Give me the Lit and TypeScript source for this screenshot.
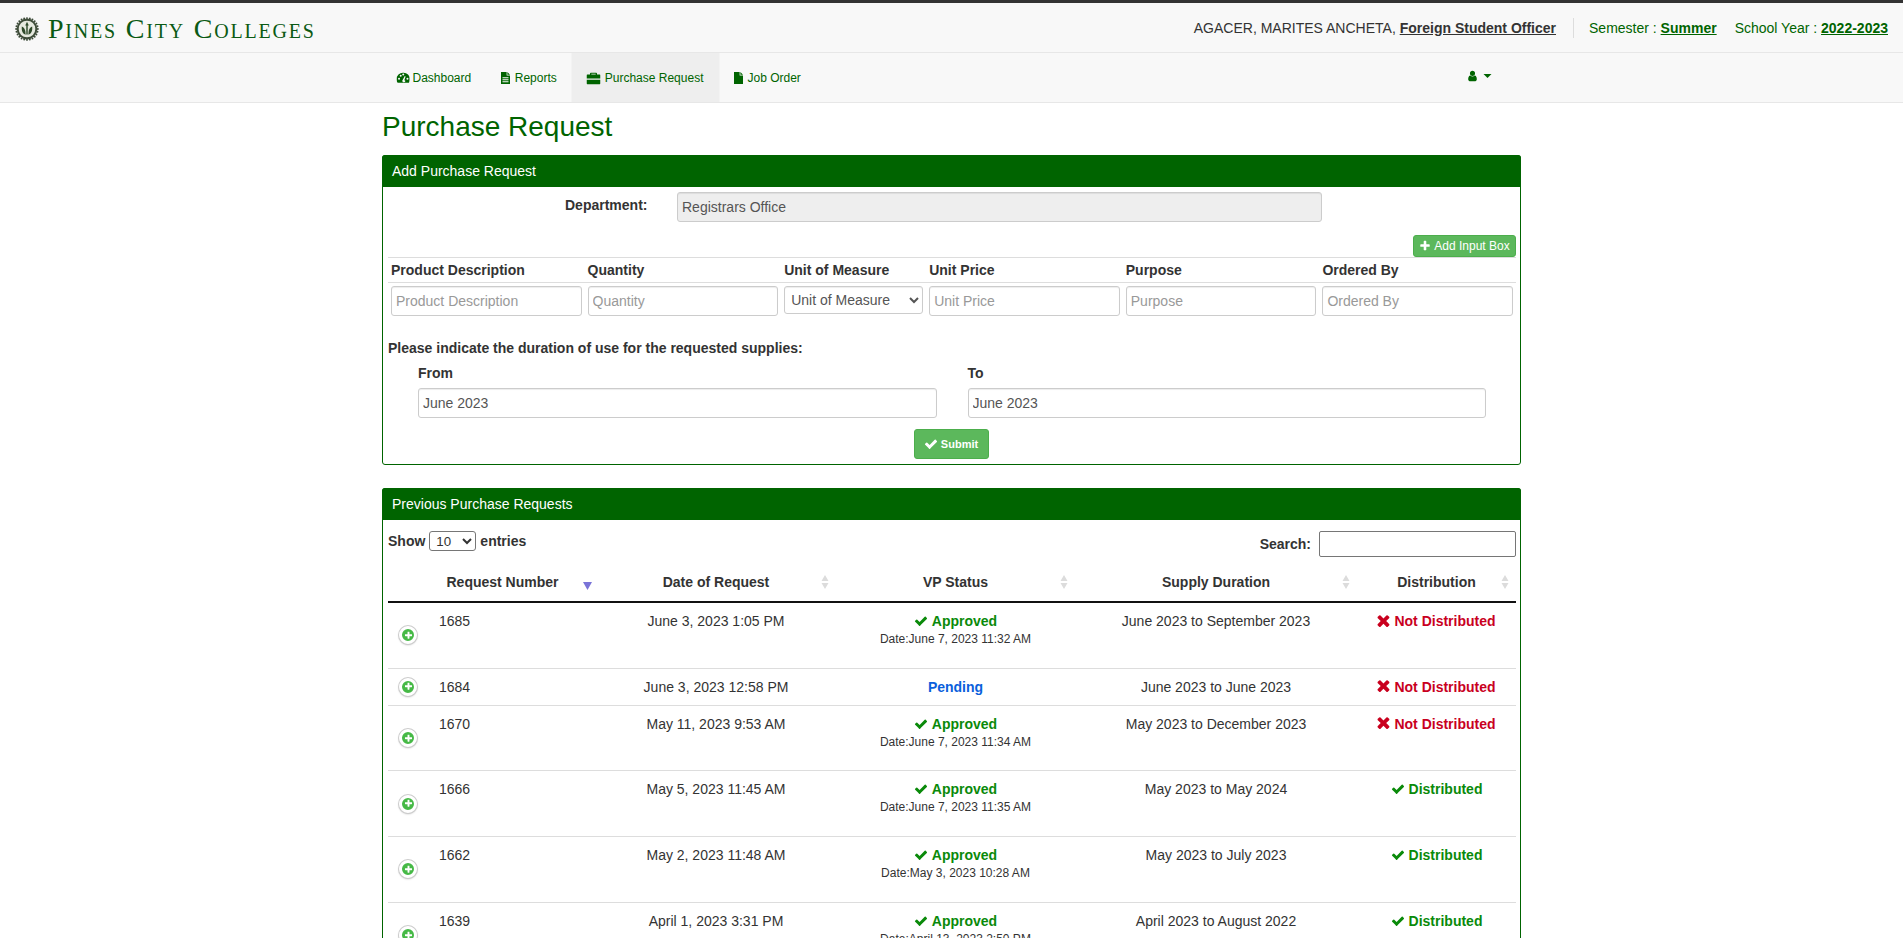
import { LitElement, html, css, svg } from "lit";
import { customElement } from "lit/decorators.js";

const ico = (vb: string, d: string, cls = "ico") =>
  html`<svg class=${cls} viewBox=${vb} aria-hidden="true"><path d=${d}></path></svg>`;
const CHECK = "M1671 566q0 40-28 68l-724 724-136 136q-28 28-68 28t-68-28l-136-136-362-362q-28-28-28-68t28-68l136-136q28-28 68-28t68 28l294 295 656-657q28-28 68-28t68 28l136 136q28 28 28 68z";
const TIMES = "M1490 1322q0 40-28 68l-136 136q-28 28-68 28t-68-28l-294-294-294 294q-28 28-68 28t-68-28l-136-136q-28-28-28-68t28-68l294-294-294-294q-28-28-28-68t28-68l136-136q28-28 68-28t68 28l294 294 294-294q28-28 68-28t68 28l136 136q28 28 28 68t-28 68l-294 294 294 294q28 28 28 68z";
const PLUS = "M1600 736v192q0 40-28 68t-68 28h-416v416q0 40-28 68t-68 28h-192q-40 0-68-28t-28-68v-416h-416q-40 0-68-28t-28-68v-192q0-40 28-68t68-28h416v-416q0-40 28-68t68-28h192q40 0 68 28t28 68v416h416q40 0 68 28t28 68z";
const USER = "M1536 1399q0 109-62.5 187t-150.5 78h-854q-88 0-150.5-78t-62.5-187q0-85 8.5-160.5t31.5-152 58.5-131 94-89 134.5-34.5q131 128 313 128t313-128q76 0 134.5 34.5t94 89 58.5 131 31.5 152 8.5 160.5zm-256-887q0 159-112.5 271.5t-271.5 112.5-271.5-112.5-112.5-271.5 112.5-271.5 271.5-112.5 271.5 112.5 112.5 271.5z";
const VB = "0 0 1792 1792";

const dashIcon = html`<svg class="ico dash" viewBox="0 0 16 16" aria-hidden="true"><path fill-rule="evenodd" d="M8 2.2a7.6 7.6 0 0 0-8 7.6c0 1.6.5 3 1.3 4.2h13.4c.8-1.200 1.300-2.600 1.300-4.200a7.600 7.600 0 0 0-8-7.600zM3 10.300a1.200 1.200 0 1 1 0-2.400 1.200 1.200 0 0 1 0 2.400zm2-3.600a1.200 1.200 0 1 1 0-2.400 1.200 1.200 0 0 1 0 2.400zm3-1.300a1.200 1.200 0 1 1 0-2.400 1.200 1.200 0 0 1 0 2.400zm2.500 6.700a1.900 1.900 0 0 1-3.700-.6l3-5.500 1 .5-1.500 4.400c.8.100 1.300.6 1.200 1.200zM13 10.300a1.200 1.200 0 1 1 0-2.400 1.200 1.200 0 0 1 0 2.400z"></path></svg>`;
const fileTextIcon = html`<svg class="ico" viewBox="0 0 16 16" aria-hidden="true"><path fill-rule="evenodd" d="M2 0h7.500v4.500H14V16H2zM10.500 0 14 3.500h-3.500zM4 7v1.300h8V7zm0 2.700v1.300h8V9.700zM4 12.300v1.300h8v-1.300z"></path></svg>`;
const fileIcon = html`<svg class="ico" viewBox="0 0 16 16" aria-hidden="true"><path d="M2 0h7.500v4.500H14V16H2zM10.500 0 14 3.500h-3.500z"></path></svg>`;
const caseIcon = html`<svg class="ico case" viewBox="0 0 16 16" aria-hidden="true"><path fill-rule="evenodd" d="M5 2h6a1 1 0 0 1 1 1v1h3a1 1 0 0 1 1 1v3.500H0V5a1 1 0 0 1 1-1h3V3a1 1 0 0 1 1-1zm.500 1.200V4h5v-.8zM0 10h16v4a1 1 0 0 1-1 1H1a1 1 0 0 1-1-1z"></path></svg>`;

const sealDots = Array.from({ length: 24 }, (_, i) => {
  const a = (i / 24) * Math.PI * 2;
  return svg`<circle cx=${15 + 13.6 * Math.cos(a)} cy=${15 + 13.6 * Math.sin(a)} r="1.200"></circle>`;
});
const seal = html`<svg class="seal" viewBox="0 0 30 30" aria-hidden="true">
  <g fill="#3c4a38">${sealDots}</g>
  <circle cx="15" cy="15" r="13" fill="#3f4d3a"></circle>
  <circle cx="15" cy="15" r="10.400" fill="#e6e9df"></circle>
  <path fill="#2f4a2a" d="M15 6l2.200 4.500h-1.300V22h-1.800V10.500h-1.300zM8.500 12c2.600 1 4.200 3.200 4.500 6.500l.3 3.800c-3.600-1-5.300-4.500-4.800-10.300zM21.500 12c-2.600 1-4.200 3.200-4.500 6.500l-.3 3.800c3.600-1 5.300-4.500 4.800-10.300z"></path>
</svg>`;

type Row = { n: string; d: string; vp?: string; dur: string; dist: boolean };
const rows: Row[] = [
  { n: "1685", d: "June 3, 2023 1:05 PM", vp: "June 7, 2023 11:32 AM", dur: "June 2023 to September 2023", dist: false },
  { n: "1684", d: "June 3, 2023 12:58 PM", dur: "June 2023 to June 2023", dist: false },
  { n: "1670", d: "May 11, 2023 9:53 AM", vp: "June 7, 2023 11:34 AM", dur: "May 2023 to December 2023", dist: false },
  { n: "1666", d: "May 5, 2023 11:45 AM", vp: "June 7, 2023 11:35 AM", dur: "May 2023 to May 2024", dist: true },
  { n: "1662", d: "May 2, 2023 11:48 AM", vp: "May 3, 2023 10:28 AM", dur: "May 2023 to July 2023", dist: true },
  { n: "1639", d: "April 1, 2023 3:31 PM", vp: "April 13, 2023 2:50 PM", dur: "April 2023 to August 2022", dist: true },
];

const sortBoth = html`<svg class="sort" viewBox="0 0 8 16" aria-hidden="true"><path d="M4 1l3.500 6h-7zM4 15l-3.500-6h7z"></path></svg>`;
const sortDesc = html`<svg class="sort desc" viewBox="0 0 8 8" aria-hidden="true"><path d="M4 7L0 0h8z"></path></svg>`;

@customElement("app-root")
export class AppRoot extends LitElement {
  static styles = css`
    :host {
      display: block;
      height: 100vh;
      overflow: hidden;
      background: #fff;
      color: #333;
      font: 14px/20px "Liberation Sans", Arial, sans-serif;
    }
    * { box-sizing: border-box; }
    .ico { width: 1em; height: 1em; fill: currentColor; flex: none; }

    .topbar {
      height: 53px;
      border-top: 3px solid #333;
      border-bottom: 1px solid #e7e7e7;
      background: #f8f8f8;
      display: flex;
      align-items: center;
      justify-content: space-between;
      padding: 0 15px 0 15px;
    }
    .brand { display: flex; align-items: center; gap: 9px; margin-top: 2px; }
    .seal { width: 24px; height: 24px; }
    .wordmark {
      font: 28px/30px "Liberation Serif", "Times New Roman", serif;
      font-variant: small-caps;
      letter-spacing: 1.8px;
      color: #0b5a14;
    }
    .meta { display: flex; align-items: center; height: 20px; }
    .meta a { font-weight: bold; text-decoration: underline; color: inherit; }
    .who { padding-right: 17px; height: 20px; }
    .term {
      color: #006400;
      border-left: 1px solid #ddd;
      padding-left: 15px;
      display: flex;
      gap: 18px;
    }

    .navbar {
      height: 50px;
      background: #f8f8f8;
      border-bottom: 1px solid #e7e7e7;
    }
    .nav-inner {
      width: 1140px;
      margin: 0 auto;
      display: flex;
      justify-content: space-between;
      height: 49px;
      color: #006400;
      font-size: 12px;
      transform: translateX(-.5px);
    }
    .tabs { display: flex; }
    .tab { display: flex; align-items: center; gap: 3px; padding: 1px 15px 0; }
    .tab .ico { width: 12px; height: 12px; }
    .tab .ico.dash { width: 13.500px; height: 13.500px; }
    .tab:first-child { padding-right: 13.500px; }
    .tab .ico.case { width: 14px; height: 14px; }
    .tab.active { background: #eee; gap: 4px; padding-right: 16px; }
    .tab.active + .tab { padding-left: 13px; }
    .usermenu { display: flex; align-items: center; gap: 5px; padding: 0 30px 4px 0; }
    .usermenu .ico { width: 12px; height: 12px; }
    .caret { width: 0; height: 0; border: 4px solid transparent; border-top-color: #006400; border-bottom: 0; }

    main { width: 1139px; margin: 0 auto; }
    h1 {
      margin: 0;
      padding: 8px 0 0 0;
      height: 52px;
      font: 400 28px/32px "Liberation Sans", Arial, sans-serif;
      color: #006400;
    }
    .panel {
      border: 1px solid #006400;
      border-radius: 3px;
      margin-bottom: 23px;
    }
    .panel-head {
      height: 32px;
      margin: -1px -1px 0;
      background: #006400;
      color: #fff;
      padding: 6px 10px 0 10px;
      border-radius: 3px 3px 0 0;
    }
    .panel-body { padding: 5px 4px 5px 5px; }

    input, select {
      font: 14px/20px "Liberation Sans", Arial, sans-serif;
      color: #555;
    }
    .control {
      display: block;
      width: 100%;
      height: 30px;
      border: 1px solid #ccc;
      border-radius: 3px;
      padding: 5px 4px;
      background: #fff;
      box-shadow: inset 0 1px 1px rgba(0,0,0,.075);
    }
    .control::placeholder { color: #999; opacity: 1; }
    .control[readonly] { background: #eee; }

    .dept { display: flex; }
    .dept label { width: 289px; padding: 3px 0 0 177px; font-weight: bold; }
    .dept .control { width: 645px; }

    .add-row { display: flex; justify-content: flex-end; margin-top: 13px; }
    .btn {
      display: inline-flex;
      align-items: center;
      justify-content: center;
      gap: 3px;
      border: 1px solid #4cae4c;
      border-radius: 3px;
      background: #5cb85c;
      color: #fff;
      font-family: inherit;
      padding: 0;
    }
    .btn-add { width: 103px; height: 22px; font-size: 12px; }
    .btn-add .ico { width: 12px; height: 12px; }
    .btn-submit { width: 75px; height: 30px; font-size: 11px; font-weight: bold; }
    .btn-submit .ico { width: 14px; height: 14px; }

    .entry { width: 100%; border-collapse: separate; border-spacing: 0; table-layout: fixed; }
    .entry th {
      text-align: left;
      padding: 2px 3px 2px 3px;
      height: 25px;
      font-weight: bold;
      border-top: 1px solid #ddd;
      border-bottom: 1px solid #ddd;
    }
    .entry td { padding: 3px; vertical-align: top; }
    .entry select.control { height: 28px; padding: 0 2px 0 2px; }
    .entry th.c3 { width: 145px; }

    .duration { margin: 19px 0 0; font-weight: bold; }
    .range { display: grid; grid-template-columns: 518.500px 518.500px; column-gap: 31px; padding: 5px 0 0 30px; }
    .range label { display: block; font-weight: bold; margin-bottom: 5px; }
    .submit-row { display: flex; justify-content: center; margin: 11px 0 0 -2px; }

    .panel.list { margin-bottom: 60px; }
    .dt-top { display: flex; justify-content: space-between; height: 38px; font-weight: bold; padding-top: 6px; }
    .show { display: flex; align-items: flex-start; gap: 2px; }
    .show select { width: 47px; height: 20px; padding: 0 0 0 2px; border: 1px solid #767676; border-radius: 3px; background: #fff; color: #333; font-size: 13.330px; margin: 0 2px; }
    .search { display: flex; gap: 8px; align-items: center; height: 26px; }
    .search input { width: 197px; height: 26px; border: 1px solid #767676; border-radius: 2px; background: #fff; }

    .dt { width: 100%; table-layout: fixed; border-collapse: separate; border-spacing: 0; }
    .dt th {
      position: relative;
      height: 40px;
      padding: 0 10px;
      text-align: center;
      font-weight: bold;
      border-bottom: 2px solid #111;
    }
    .dt th:first-child { padding-left: 31px; }
    .sort { position: absolute; right: 7px; top: 11px; width: 8px; height: 16px; fill: #dcdcdc; }
    .sort.desc { fill: #7a74d8; right: 4px; top: 19px; width: 9px; height: 9px; }
    .dt td {
      padding: 8px 10px;
      text-align: center;
      vertical-align: top;
      border-top: 1px solid #ddd;
    }
    .dt tbody tr:first-child td { border-top: 0; }
    .dt td.num { position: relative; text-align: left; padding-left: 51px; }
    .plus {
      position: absolute;
      left: 11px;
      top: 50%;
      margin-top: -9px;
      width: 18px;
      height: 18px;
      border-radius: 50%;
      background: #46b946;
      border: 3px solid #fff;
      box-shadow: 0 0 0 1px #ccc, 0 1px 2px rgba(0,0,0,.3);
      display: flex;
      align-items: center;
      justify-content: center;
      color: #fff;
    }
    .plus .ico { width: 9px; height: 9px; }
    .status { display: inline-flex; align-items: center; gap: 4px; font-weight: bold; vertical-align: top; }
    .status .ico { width: 14px; height: 14px; }
    .status .ico.x { width: 13px; height: 13px; margin-top: -2px; }
    .ok { color: #0a8a0a; }
    .bad { color: #c9001e; }
    .wait { color: #0a5fdc; }
    .stamp { display: block; font-size: 12px; line-height: 15px; padding-bottom: 12.700px; margin-top: 1px; }
  `;

  render() {
    return html`
      <header class="topbar">
        <div class="brand">${seal}<span class="wordmark">Pines City Colleges</span></div>
        <div class="meta">
          <div class="who">AGACER, MARITES ANCHETA, <a>Foreign Student Officer</a></div>
          <div class="term">
            <span>Semester : <a>Summer</a></span>
            <span>School Year : <a>2022-2023</a></span>
          </div>
        </div>
      </header>
      <nav class="navbar">
        <div class="nav-inner">
          <div class="tabs">
            <div class="tab">${dashIcon}Dashboard</div>
            <div class="tab">${fileTextIcon}Reports</div>
            <div class="tab active">${caseIcon}Purchase Request</div>
            <div class="tab">${fileIcon}Job Order</div>
          </div>
          <div class="usermenu">${ico(VB, USER)}<span class="caret"></span></div>
        </div>
      </nav>
      <main>
        <h1>Purchase Request</h1>
        <section class="panel">
          <div class="panel-head">Add Purchase Request</div>
          <div class="panel-body">
            <div class="dept">
              <label>Department:</label>
              <input class="control" readonly value="Registrars Office" />
            </div>
            <div class="add-row">
              <button class="btn btn-add">${ico(VB, PLUS)}Add Input Box</button>
            </div>
            <table class="entry">
              <thead>
                <tr>
                  <th>Product Description</th>
                  <th>Quantity</th>
                  <th class="c3">Unit of Measure</th>
                  <th>Unit Price</th>
                  <th>Purpose</th>
                  <th>Ordered By</th>
                </tr>
              </thead>
              <tbody>
                <tr>
                  <td><input class="control" placeholder="Product Description" /></td>
                  <td><input class="control" placeholder="Quantity" /></td>
                  <td><select class="control"><option>Unit of Measure</option></select></td>
                  <td><input class="control" placeholder="Unit Price" /></td>
                  <td><input class="control" placeholder="Purpose" /></td>
                  <td><input class="control" placeholder="Ordered By" /></td>
                </tr>
              </tbody>
            </table>
            <p class="duration">Please indicate the duration of use for the requested supplies:</p>
            <div class="range">
              <div><label>From</label><input class="control" value="June 2023" /></div>
              <div><label>To</label><input class="control" value="June 2023" /></div>
            </div>
            <div class="submit-row">
              <button class="btn btn-submit">${ico(VB, CHECK)}Submit</button>
            </div>
          </div>
        </section>

        <section class="panel list">
          <div class="panel-head">Previous Purchase Requests</div>
          <div class="panel-body">
            <div class="dt-top">
              <div class="show">Show <select><option>10</option></select> entries</div>
              <div class="search">Search: <input /></div>
            </div>
            <table class="dt">
              <colgroup>
                <col style="width:208px" /><col style="width:240px" /><col style="width:239px" /><col style="width:282px" /><col />
              </colgroup>
              <thead>
                <tr>
                  <th>Request Number${sortDesc}</th>
                  <th>Date of Request${sortBoth}</th>
                  <th>VP Status${sortBoth}</th>
                  <th>Supply Duration${sortBoth}</th>
                  <th>Distribution${sortBoth}</th>
                </tr>
              </thead>
              <tbody>
                ${rows.map(
                  (r) => html`<tr>
                    <td class="num"><span class="plus">${ico(VB, PLUS)}</span>${r.n}</td>
                    <td>${r.d}</td>
                    <td>
                      ${r.vp
                        ? html`<span class="status ok">${ico(VB, CHECK)}Approved</span><span class="stamp">Date:${r.vp}</span>`
                        : html`<span class="status wait">Pending</span>`}
                    </td>
                    <td>${r.dur}</td>
                    <td>
                      ${r.dist
                        ? html`<span class="status ok">${ico(VB, CHECK)}Distributed</span>`
                        : html`<span class="status bad">${ico("250 250 1300 1300", TIMES, "ico x")}Not Distributed</span>`}
                    </td>
                  </tr>`
                )}
              </tbody>
            </table>
          </div>
        </section>
      </main>
    `;
  }
}
